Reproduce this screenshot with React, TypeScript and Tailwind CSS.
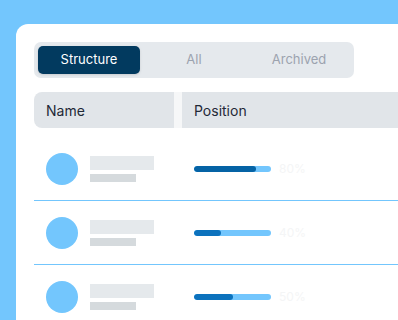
import React from "react";

const rows = [
  { pct: 80, fill: "bg-[#0563a5]" },
  { pct: 35, fill: "bg-[#0c72bd]" },
  { pct: 50, fill: "bg-[#0c72bd]" },
];

export default function App() {
  return (
    <div
      className="w-[398px] h-[320px] overflow-hidden bg-[#73c6fd] pl-4 pt-6"
      style={{ fontFamily: "Inter, 'Noto Sans', sans-serif" }}
    >
      <div className="w-[420px] h-[320px] bg-white rounded-tl-[12px] pl-[18px] pt-[18px]">
        <div className="w-[320px] h-9 rounded-[7px] bg-[#e5e9ed] p-1 grid grid-cols-3 gap-[3px]">
          <div className="rounded-[5px] bg-[#023a5f] text-white text-[13px] flex items-center justify-center shadow-sm">
            Structure
          </div>
          <div className="text-[#9ca3af] text-[13px] flex items-center justify-center">All</div>
          <div className="text-[#9ca3af] text-[13px] flex items-center justify-center">Archived</div>
        </div>

        <div className="mt-[14px] flex h-9">
          <div className="w-[140px] bg-[#e1e5e9] rounded-l-[8px] flex items-center pl-3 text-[14px] text-[#1f2937]">
            Name
          </div>
          <div className="w-2 bg-[#f6f7f8]" />
          <div className="flex-1 bg-[#e1e5e9] flex items-center pl-3 text-[14px] text-[#1f2937]">
            Position
          </div>
        </div>

        <div className="mt-[9px]">
          {rows.map((r, i) => (
            <div key={i} className="h-[64px] flex items-center border-b border-[#73c6fd]">
              <div className="w-[148px] flex items-center pl-3 gap-3">
                <div className="w-8 h-8 rounded-full bg-[#73c6fd]" />
                <div className="flex flex-col gap-1">
                  <div className="w-16 h-[14px] bg-[#e5e9ec]" />
                  <div className="w-[46px] h-2 bg-[#d5dadd]" />
                </div>
              </div>
              <div className="flex items-center pl-3 gap-2">
                <div className="w-[77px] h-1.5 rounded-full bg-[#73c6fd] overflow-hidden">
                  <div className={`h-full rounded-full ${r.fill}`} style={{ width: `${r.pct}%` }} />
                </div>
                <span className="text-[12px] text-[#f4f5f6]">{[80, 40, 50][i]}%</span>
              </div>
            </div>
          ))}
        </div>
      </div>
    </div>
  );
}
